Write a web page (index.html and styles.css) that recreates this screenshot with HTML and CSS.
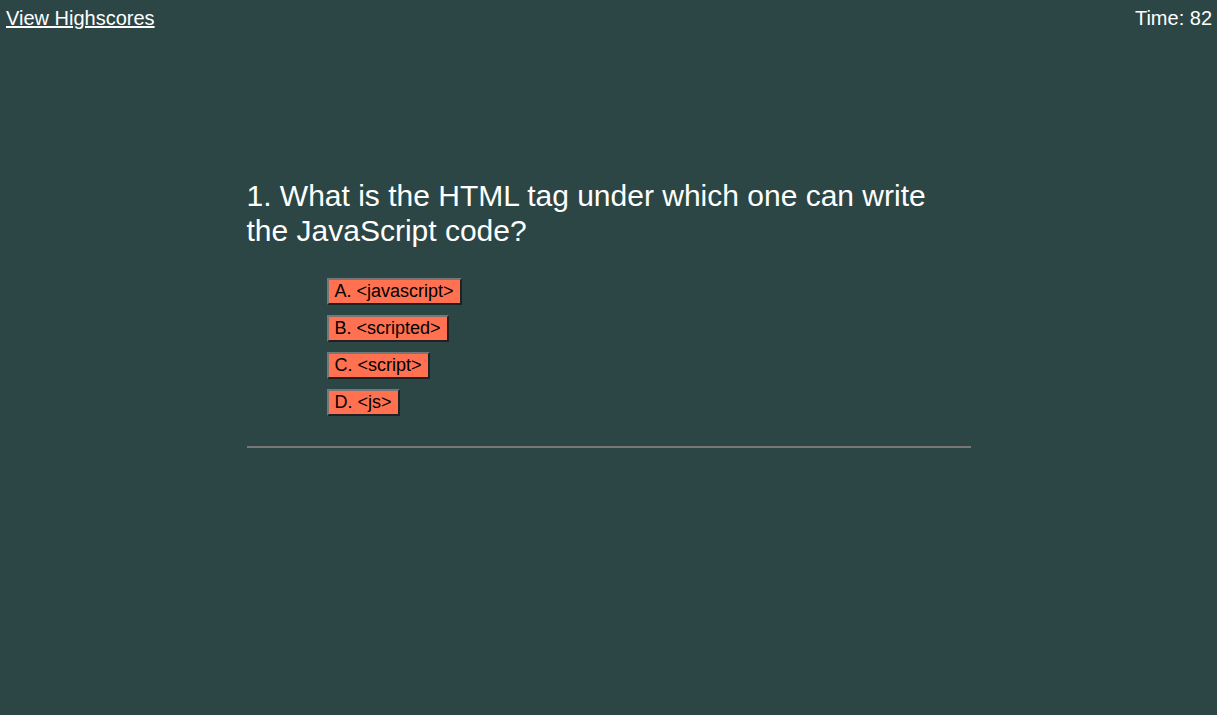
FILE: index.html
```html
<!DOCTYPE html>
<html>
<head>
<meta charset="utf-8">
<link rel="stylesheet" href="styles.css">
</head>
<body>
<header class="topbar">
  <a class="highscores" href="#">View Highscores</a>
  <span class="timer">Time: 82</span>
</header>
<main class="quiz">
  <h1 class="question">1. What is the HTML tag under which one can write the JavaScript code?</h1>
  <div class="choices">
    <button class="choice">A. &lt;javascript&gt;</button>
    <button class="choice">B. &lt;scripted&gt;</button>
    <button class="choice">C. &lt;script&gt;</button>
    <button class="choice">D. &lt;js&gt;</button>
  </div>
  <hr class="divider">
</main>
</body>
</html>
```
FILE: styles.css
```css
html, body {
  margin: 0;
  padding: 0;
}
body {
  background: #2c4646;
  color: #ffffff;
  font-family: "Liberation Sans", Arial, sans-serif;
  min-height: 715px;
}
.topbar {
  display: flex;
  justify-content: space-between;
  align-items: flex-start;
  padding: 5px 5px 0 6px;
  font-size: 20px;
  line-height: 26px;
}
.highscores {
  color: #ffffff;
  text-decoration: underline;
}
.quiz {
  width: 724px;
  margin: 147px auto 0;
}
.question {
  margin: 0;
  font-size: 30px;
  font-weight: normal;
  line-height: 35px;
}
.choices {
  display: flex;
  flex-direction: column;
  align-items: flex-start;
  gap: 10px;
  margin: 30px 0 0 80px;
}
.choice {
  font-family: "Liberation Sans", Arial, sans-serif;
  font-size: 18px;
  line-height: 21px;
  color: #000000;
  background: #ff7150;
  border: 2px outset #767676;
  padding: 1px 6px;
  margin: 0;
}
.divider {
  margin: 30px 0 0;
  border: none;
  border-top: 2px solid #777777;
  height: 0;
}
```
